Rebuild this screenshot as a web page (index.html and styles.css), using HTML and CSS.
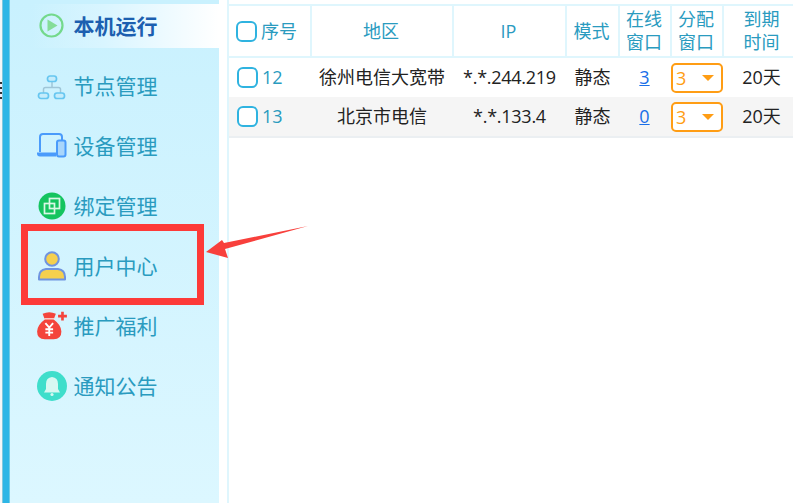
FILE: index.html
```html
<!DOCTYPE html>
<html lang="zh">
<head>
<meta charset="utf-8">
<title>本机运行</title>
<link rel="stylesheet" href="styles.css">
</head>
<body>
<div class="app">
  <div class="edge"><div class="ticks"></div></div>
  <div class="bar"></div>
  <nav class="side">
    <a class="item active">
      <span class="ico"><svg width="28" height="28" viewBox="0 0 28 28"><circle cx="13.500" cy="13.500" r="11" fill="none" stroke="#74d98c" stroke-width="2.200"/><path d="M9.500 7.500 L19.500 13.500 L9.500 19.500 Z" fill="#84dd98"/></svg></span>
      <span class="label">本机运行</span>
    </a>
    <a class="item">
      <span class="ico"><svg width="30" height="30" viewBox="0 0 30 30"><path d="M15 11V16M6.500 22V18.500Q6.500 16.500 8.500 16.500H21.500Q23.500 16.500 23.500 18.500V22" fill="none" stroke="#9fc6d8" stroke-width="1.500"/><rect x="10.500" y="5" width="9" height="5.500" rx="2.500" fill="#c5ecfb" stroke="#66c6f0" stroke-width="1.700"/><rect x="1.500" y="22" width="10" height="5.500" rx="2.500" fill="#c5ecfb" stroke="#66c6f0" stroke-width="1.700"/><rect x="17.500" y="22" width="10" height="5.500" rx="2.500" fill="#c5ecfb" stroke="#66c6f0" stroke-width="1.700"/></svg></span>
      <span class="label">节点管理</span>
    </a>
    <a class="item">
      <span class="ico"><svg width="32" height="28" viewBox="0 0 32 28"><path d="M4 20V5Q4 2 7 2H23Q26 2 26 5V8" fill="none" stroke="#4a9bfb" stroke-width="2"/><path d="M1 20.500H20V24.500H4Q1 24.500 1 21.500Z" fill="#4a9bfb"/><rect x="21" y="8.500" width="8.500" height="16" rx="2" fill="#a9d6fb" stroke="#4a9bfb" stroke-width="2"/></svg></span>
      <span class="label">设备管理</span>
    </a>
    <a class="item">
      <span class="ico"><svg width="28" height="28" viewBox="0 0 28 28"><circle cx="14" cy="14" r="13.500" fill="#14c45f"/><rect x="11.500" y="6.500" width="10" height="10" fill="none" stroke="#d9f7e5" stroke-width="1.700"/><rect x="6.500" y="11.500" width="10" height="10" fill="none" stroke="#d9f7e5" stroke-width="1.700"/></svg></span>
      <span class="label">绑定管理</span>
    </a>
    <a class="item">
      <span class="ico"><svg width="30" height="32" viewBox="0 0 30 32"><circle cx="15" cy="9" r="6.800" fill="#f5d04e" stroke="#6f94e0" stroke-width="2"/><path d="M2 29.500V27Q2 20 9 19H21Q28 20 28 27V29.500Z" fill="#f5d04e" stroke="#6f94e0" stroke-width="2" stroke-linejoin="round"/></svg></span>
      <span class="label">用户中心</span>
    </a>
    <a class="item">
      <span class="ico"><svg width="32" height="32" viewBox="1 2 29 28"><path d="M21 7H29M25 3V11" stroke="#f4453c" stroke-width="2.400" fill="none"/><path d="M7 5Q13 2 19 5L17 10Q24 15 24 21Q24 28 17 28H9Q2 28 2 21Q2 15 9 10Z" fill="#f4453c"/><path d="M8.500 9.500H17.500" stroke="#fbe3df" stroke-width="1.200"/><path d="M9.500 13.500L13 17.500L16.500 13.500M13 17.500V25M9.500 19H16.500M9.500 22H16.500" stroke="#fff" stroke-width="1.700" fill="none"/></svg></span>
      <span class="label">推广福利</span>
    </a>
    <a class="item">
      <span class="ico"><svg width="30" height="30" viewBox="0 0 30 30"><circle cx="15" cy="15" r="15" fill="#3fdecb"/><path d="M15 6Q21 6.500 21 13V18L23 21.500H7L9 18V13Q9 6.500 15 6Z" fill="#d7f8f2"/><circle cx="15" cy="23.500" r="1.600" fill="#d7f8f2"/></svg></span>
      <span class="label">通知公告</span>
    </a>
  </nav>
  <div class="gutter"></div>
  <main class="main">
    <table class="grid">
      <colgroup>
        <col class="c1"><col class="c2"><col class="c3"><col class="c4"><col class="c5"><col class="c6"><col class="c7">
      </colgroup>
      <thead>
        <tr>
          <th class="first"><span class="check"></span>序号</th>
          <th>地区</th>
          <th>IP</th>
          <th>模式</th>
          <th>在线<br>窗口</th>
          <th>分配<br>窗口</th>
          <th class="last">到期<br>时间</th>
        </tr>
      </thead>
      <tbody>
        <tr>
          <td class="first num"><span class="check"></span>12</td>
          <td>徐州电信大宽带</td>
          <td class="ip">*.*.244.219</td>
          <td>静态</td>
          <td><a class="link">3</a></td>
          <td class="pick"><span class="select">3<i class="tri"></i></span></td>
          <td class="last">20天</td>
        </tr>
        <tr class="alt">
          <td class="first num"><span class="check"></span>13</td>
          <td>北京市电信</td>
          <td class="ip">*.*.133.4</td>
          <td>静态</td>
          <td><a class="link">0</a></td>
          <td class="pick"><span class="select">3<i class="tri"></i></span></td>
          <td class="last">20天</td>
        </tr>
      </tbody>
    </table>
  </main>
  <div class="callout"></div>
  <svg class="arrow" width="104" height="34" viewBox="0 0 104 34"><path d="M103 1 L20 24 L23 33 L1 27 L17 15 L19 18 Z" fill="#f8403c"/></svg>
</div>
</body>
</html>
```
FILE: styles.css
```css
* { box-sizing: border-box; }
html, body { margin: 0; padding: 0; background: #fff; }
body {
  width: 793px;
  height: 503px;
  overflow: hidden;
  font-family: "Open Sans", "Noto Sans CJK SC", sans-serif;
}
.app {
  position: relative;
  display: flex;
  width: 793px;
  height: 503px;
  overflow: hidden;
}
.edge {
  width: 2px;
  background: #f4f7f8;
  padding-top: 82px;
}
.ticks {
  height: 18px;
  background: repeating-linear-gradient(#333 0 2px, #eef 2px 5px);
}
.bar {
  width: 8px;
  background: #2db6e6;
  border-left: 1px solid #7fc9de;
  border-right: 1px solid #6fcbe6;
}
.side {
  width: 209px;
  padding-top: 4px;
  display: flex;
  flex-direction: column;
  gap: 16px;
  background: linear-gradient(#c9f1fe, #dcf7ff);
}
.item {
  display: flex;
  align-items: center;
  height: 44px;
  padding-left: 64px;
  padding-bottom: 2px;
  font-size: 21px;
  color: #2a9bbf;
  position: relative;
}
.label { margin-left: -0.5px; }
.active {
  color: #1c5fb0;
  font-weight: 700;
  background: linear-gradient(90deg, rgba(255,255,255,0) 10%, #d9f5ff 45%, #fff 100%);
}
.ico {
  position: absolute;
  left: 26px;
  top: 50%;
  width: 32px;
  height: 32px;
  margin-top: -16px;
  display: flex;
  align-items: center;
  justify-content: center;
}
.gutter { width: 8px; }
.main {
  flex: 1;
  border-left: 2px solid #dff6fd;
  padding-top: 4px;
}
.grid {
  table-layout: fixed;
  width: 564px;
  border-collapse: separate;
  border-spacing: 0;
  font-size: 18px;
  color: #222;
}
.c1 { width: 83px; }
.c2 { width: 142px; }
.c3 { width: 113px; }
.c4 { width: 53px; }
.c5 { width: 52px; }
.c6 { width: 52px; }
.c7 { width: 69px; }
th {
  height: 54px;
  padding: 0 2px 0 0;
  font-weight: 400;
  line-height: 23px;
  color: #2a9bbf;
  border-top: 2px solid #dff6fd;
  border-bottom: 2px solid #dff6fd;
  border-right: 2px solid #dff6fd;
  text-align: center;
}
th.last { border-right: 0; }
td {
  height: 39px;
  padding: 0 2px 2px 0;
  text-align: center;
  line-height: 24px;
  white-space: nowrap;
}
td.pick { padding: 0; }
th.last, td.last { padding-left: 6px; padding-right: 0; }
tbody tr:last-child td {
  height: 41px;
  border-bottom: 2px solid #ebeff2;
}
.alt td { background: #f5f5f5; }
.first {
  text-align: left;
  padding-left: 7px;
  white-space: nowrap;
}
.num { padding-left: 8px; color: #2a9bbf; }
.ip { letter-spacing: -0.27px; }
.check {
  display: inline-block;
  width: 21px;
  height: 21px;
  margin-right: 4px;
  vertical-align: -4px;
  border: 2px solid #2fb3e0;
  border-radius: 6px;
  background: #fff;
}
.link { color: #1a6fe8; text-decoration: underline; margin-right: 1px; }
.select {
  display: flex;
  align-items: center;
  justify-content: space-between;
  width: 52px;
  height: 30px;
  margin-left: -1px;
  padding: 0 7px 0 3px;
  border: 2px solid #ff9d14;
  border-radius: 5px;
  color: #ff9d14;
  background: #fff;
  text-align: left;
}
.tri {
  width: 0;
  height: 0;
  border-left: 6px solid transparent;
  border-right: 6px solid transparent;
  border-top: 6px solid #ff9d14;
}
.callout {
  position: absolute;
  left: 21px;
  top: 224px;
  width: 183px;
  height: 81px;
  border: 7px solid #fd3a38;
}
.arrow {
  position: absolute;
  left: 205px;
  top: 225px;
}
```
